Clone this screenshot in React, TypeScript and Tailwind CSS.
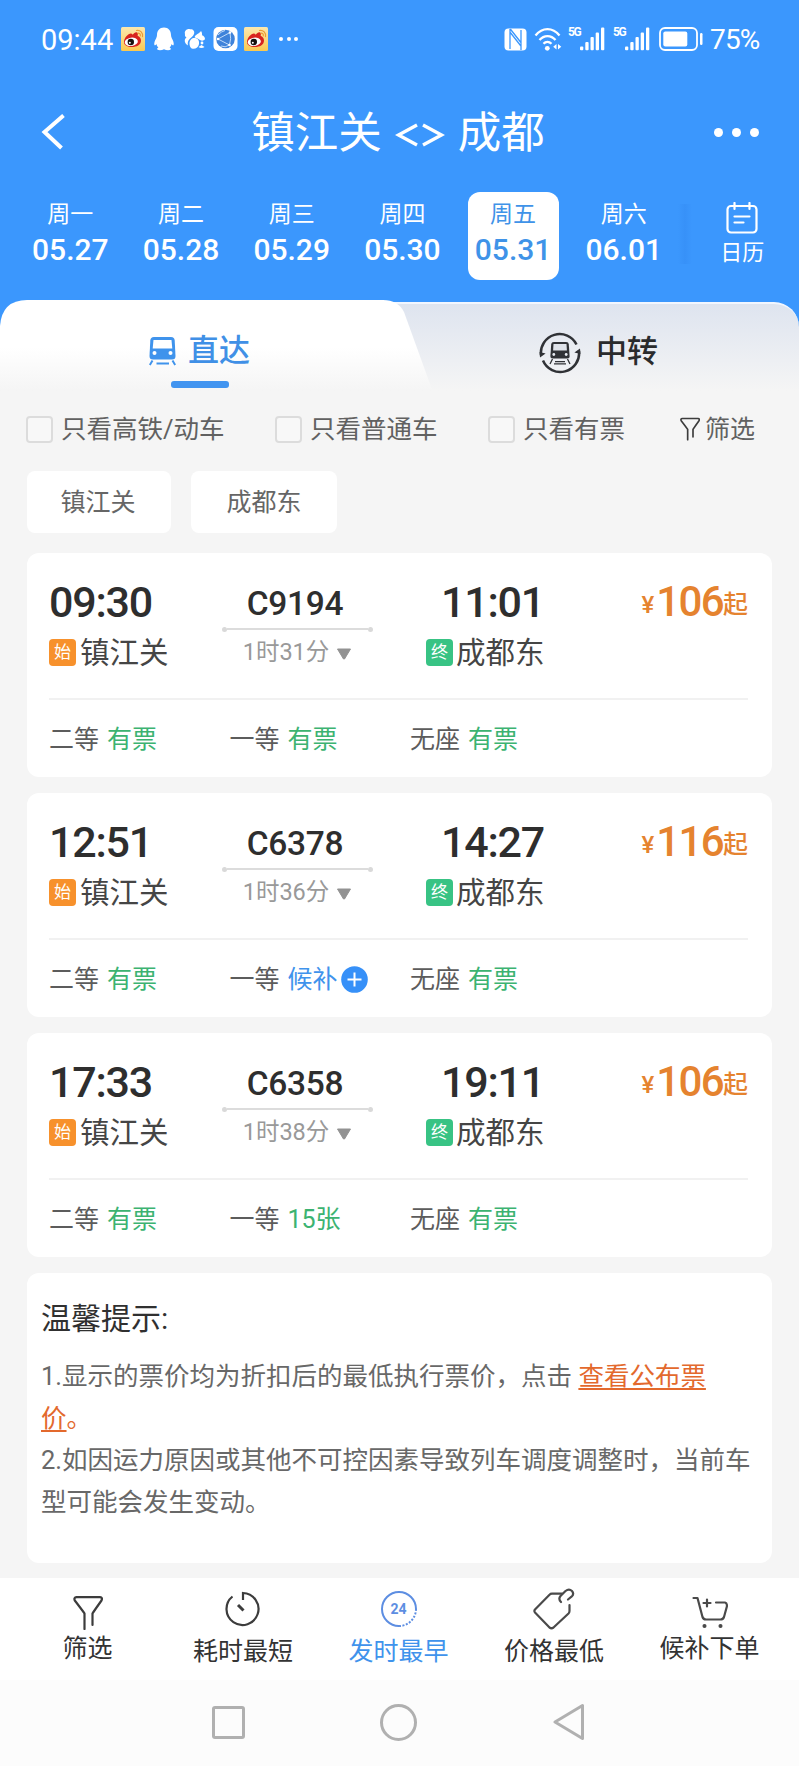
import type { ReactNode } from "react";

type Seat = { name: string; status: string; waitlist?: boolean };

type Train = {
  code: string;
  depart: string;
  arrive: string;
  duration: string;
  price: number;
  seats: Seat[];
};

const days = [
  { week: "周一", date: "05.27" },
  { week: "周二", date: "05.28" },
  { week: "周三", date: "05.29" },
  { week: "周四", date: "05.30" },
  { week: "周五", date: "05.31", active: true },
  { week: "周六", date: "06.01" },
];

const trains: Train[] = [
  {
    code: "C9194",
    depart: "09:30",
    arrive: "11:01",
    duration: "1时31分",
    price: 106,
    seats: [
      { name: "二等", status: "有票" },
      { name: "一等", status: "有票" },
      { name: "无座", status: "有票" },
    ],
  },
  {
    code: "C6378",
    depart: "12:51",
    arrive: "14:27",
    duration: "1时36分",
    price: 116,
    seats: [
      { name: "二等", status: "有票" },
      { name: "一等", status: "候补", waitlist: true },
      { name: "无座", status: "有票" },
    ],
  },
  {
    code: "C6358",
    depart: "17:33",
    arrive: "19:11",
    duration: "1时38分",
    price: 106,
    seats: [
      { name: "二等", status: "有票" },
      { name: "一等", status: "15张" },
      { name: "无座", status: "有票" },
    ],
  },
];

function WeiboIcon() {
  return (
    <svg width="24" height="24" viewBox="0 0 24 24">
      <defs>
        <linearGradient id="weibo" x1="0" y1="0" x2="0" y2="1">
          <stop offset="0" stopColor="#fbe8b0" />
          <stop offset="1" stopColor="#fbc94f" />
        </linearGradient>
      </defs>
      <rect width="24" height="24" rx="1.5" fill="url(#weibo)" />
      <path d="M3 15c0-4 4-8.500 7-8.500 1 0 1.500.8 1.700 1.300C13 6 14.500 5 16 5.500c1.200.5 1 2 .6 3.200 1.800.8 3.400 2.300 3.400 4.800 0 4.500-4.500 6.500-9 6.500s-8-1.800-8-5z" fill="#d8241f" />
      <ellipse cx="10.300" cy="14.800" rx="6.600" ry="4.200" fill="#fff" transform="rotate(-8 10.300 14.800)" />
      <circle cx="9.800" cy="15" r="3.200" fill="#17110f" />
      <circle cx="8.800" cy="15.800" r="1" fill="#fff" />
      <path d="M15.500 3.500c3.800-.6 6.800 2.300 6 6.200M17 6.200c1.800 0 2.600 1 2.300 2.600" fill="none" stroke="#ec9b35" strokeWidth="1.200" strokeLinecap="round" />
    </svg>
  );
}

function PenguinIcon() {
  return (
    <svg width="22" height="24" viewBox="0 0 22 24" fill="#fff">
      <path d="M11 .5c4.500 0 7 3.300 7 7.500 0 1.200.3 2 .8 3.300 1.300 2.300 2.400 4.700 1.800 6.700-.5.900-1.400-.2-2-1-.3 1.400-.9 2.500-2 3.600 1.200.6 1.700 1.400.8 2.100-1.300.8-4.500.6-6.400-.5-1.900 1.100-5.100 1.300-6.400.5-.9-.7-.4-1.500.8-2.100-1.100-1.100-1.700-2.200-2-3.600-.6.800-1.500 1.900-2 1-.6-2 .5-4.400 1.800-6.700C3.700 10 4 9.200 4 8 4 3.800 6.500.5 11 .5z" />
    </svg>
  );
}

function SquirrelIcon() {
  return (
    <svg width="22" height="22" viewBox="0 0 22 22" fill="#fff">
      <path d="M1 6C0 3 3 .5 6 1.200 9 .8 11 3 10 6c-.7 2.500-4 4-5.500 6.500-1.200 2.200-.5 5-.5 5C0 15 0 11 2.500 9.500 1 8.500.7 7.500 1 6z" />
      <path d="M10.500 9.300c1-3.300 4.500-3.300 6.500-6.300 1 1.500 1.300 2.800 1 4.300 1.800.5 3 2 3 4-1.300 1.700-3.500 1.700-5 .7-1.500-1-3.500-1.700-5.500-2.700z" />
      <path d="M5.500 15.500c0-4 3-6 5.700-5.500 3 .4 4.300 3 3.800 6-.5 3-3 5-6.300 4.700-2.200-.2-3.200-2.700-3.200-5.200z" />
      <circle cx="18" cy="15" r="1.400" />
      <path d="M14.500 19c1.500 1.500 4.500 1.300 6 0l-3-2z" />
    </svg>
  );
}

function GlobeIcon() {
  return (
    <svg width="25" height="24" viewBox="0 0 25 24" fill="none">
      <rect x=".5" width="24" height="24" rx="5" fill="#fff" />
      <circle cx="12.500" cy="12" r="9.300" fill="#3f83da" />
      <path d="M5 12L17 5.500M5 12l11.500 6M17 5.500q1.500 6-.5 12.500M5 8q3-3.500 7-4.500M8 19q4 2 8.500-1" stroke="#cfe4fc" strokeWidth=".9" />
      <circle cx="17" cy="5.500" r="1.300" fill="#fff" />
      <circle cx="5" cy="12" r="1.300" fill="#fff" />
      <circle cx="16.500" cy="18" r="1.300" fill="#fff" />
    </svg>
  );
}

function NfcIcon() {
  return (
    <svg width="23" height="23" viewBox="0 0 23 23">
      <rect x=".5" y=".5" width="22" height="22" rx="4" fill="#fff" />
      <path d="M6 1v20M6.300 4.500l11 14M6.300 1l11 14M17 2v20" fill="none" stroke="#3b97fd" strokeWidth="1.300" />
    </svg>
  );
}

function WifiIcon() {
  return (
    <svg width="28" height="24" viewBox="0 0 28 24" fill="none">
      <path d="M1.500 8.500C8.500 0 18.500 0 25.500 8.500M5.500 13c4.500-5.300 11.500-5.300 16 0M9.500 16.800c2.300-2.500 5.500-2.500 8 0" stroke="#fff" strokeWidth="2.300" />
      <circle cx="13.300" cy="21.300" r="2.400" fill="#fff" />
      <path d="M22.500 17v5.500l-3.300-2.700zM24 17v5.500l3.300-2.700z" fill="#fff" />
    </svg>
  );
}

function Signal() {
  return (
    <div className="flex h-6 w-[38px] items-start">
      <span className="w-[12px] text-[12px] leading-[11px] font-bold tracking-[-1.4px]">5G</span>
      <svg width="25" height="24" viewBox="0 0 25 24" fill="#fff">
        <rect x="0" y="19.500" width="3.300" height="3.700" rx="1" />
        <rect x="5.300" y="15" width="3.300" height="8.200" rx="1" />
        <rect x="10.500" y="10" width="3.300" height="13.200" rx="1" />
        <rect x="15.700" y="5.500" width="3.300" height="17.700" rx="1" />
        <rect x="21" y="0.500" width="3.300" height="22.700" rx="1" />
      </svg>
    </div>
  );
}

function BatteryIcon() {
  return (
    <svg width="44" height="24" viewBox="0 0 44 24" fill="none">
      <rect x="1" y="1" width="37" height="22" rx="5" stroke="#fff" strokeWidth="1.800" />
      <rect x="4.300" y="4.500" width="24" height="15" rx="2" fill="#fff" />
      <rect x="41" y="6" width="2.500" height="12" rx="1.200" fill="#fff" />
    </svg>
  );
}

function StatusBar() {
  return (
    <div className="flex h-[78px] items-center pl-[41px] text-white">
      <span className="mt-[2px] w-[80px] text-[29px] leading-none">09:44</span>
      <WeiboIcon />
      <span className="ml-[8px]"><PenguinIcon /></span>
      <span className="ml-[9px]"><SquirrelIcon /></span>
      <span className="ml-[7px]"><GlobeIcon /></span>
      <span className="ml-[6px]"><WeiboIcon /></span>
      <span className="ml-[11px] flex gap-[3.500px]">
        <i className="size-1 rounded-full bg-white" />
        <i className="size-1 rounded-full bg-white" />
        <i className="size-1 rounded-full bg-white" />
      </span>
      <div className="mr-[38px] ml-auto flex items-center">
        <NfcIcon />
        <span className="ml-[7px]"><WifiIcon /></span>
        <span className="ml-[6px]"><Signal /></span>
        <span className="ml-[7px]"><Signal /></span>
        <span className="ml-[8px]"><BatteryIcon /></span>
        <span className="mt-[2px] ml-[7px] w-[51px] text-[28px] leading-none tracking-[-0.8px]">75%</span>
      </div>
    </div>
  );
}

function TitleBar() {
  return (
    <div className="flex h-[108px] items-center text-white">
      <svg className="ml-[41px]" width="25" height="36" viewBox="0 0 25 36" fill="none">
        <path d="M22.500 1.500L3.500 18l17 16" stroke="#fff" strokeWidth="4" />
      </svg>
      <h1 className="flex flex-1 items-center justify-center pt-[4px] pl-[16px] text-[43.500px] leading-none">
        镇江关
        <svg className="mx-[13px] mt-px" width="50" height="24" viewBox="0 0 50 24" fill="none">
          <path d="M22 2L3.500 12 22 22M28 2l18.500 10L28 22" stroke="#fff" strokeWidth="3.400" />
        </svg>
        成都
      </h1>
      <div className="mr-[40px] flex gap-[9px]">
        <i className="size-[9px] rounded-full bg-white" />
        <i className="size-[9px] rounded-full bg-white" />
        <i className="size-[9px] rounded-full bg-white" />
      </div>
    </div>
  );
}

function DateStrip() {
  return (
    <div className="flex h-[114px] pt-[6px] pl-[15px] text-white">
      {days.map((day) => (
        <div key={day.date} className="flex w-[110.700px] justify-center">
          <div
            className={
              day.active
                ? "flex h-[88px] w-[91px] flex-col items-center rounded-xl bg-white text-[#3f93e8]"
                : "flex h-[88px] w-[91px] flex-col items-center"
            }
          >
            <span className="mt-[11px] text-[23px] leading-6">{day.week}</span>
            <span className="mt-[7px] text-[30px] leading-8 font-medium">{day.date}</span>
          </div>
        </div>
      ))}
      <div className="mt-[12px] -ml-px h-[60px] w-[14px] bg-linear-to-r from-[#3b97fd] via-[#3791f8] to-[#3b97fd]" />
      <div className="ml-[28px] flex flex-col items-center pt-[10px]">
        <svg width="32" height="32" viewBox="0 0 32 32" fill="none" stroke="#fff" strokeWidth="2.200" strokeLinecap="round">
          <rect x="1.500" y="4" width="29" height="26.500" rx="3.500" />
          <path d="M8.500 1v6M23.500 1v6M8.500 14.500h15M8.500 20.500h9" />
        </svg>
        <span className="mt-[7px] text-[22px] leading-[23px]">日历</span>
      </div>
    </div>
  );
}

function TrainIcon() {
  return (
    <svg width="27" height="30" viewBox="0 0 27 30">
      <path d="M5 1h17c2.500 0 3.500 1.200 3.700 3.500L26.500 20c0 2.500-1 3.500-3.500 3.500H4C1.500 23.500.5 22.500.5 20L1.300 4.500C1.500 2.200 2.500 1 5 1z" fill="#3f93ec" />
      <path d="M4.500 4h18l.8 8.500H3.700z" fill="#fff" />
      <circle cx="5.500" cy="17" r="2" fill="#fff" />
      <circle cx="21.500" cy="17" r="2" fill="#fff" />
      <path d="M3.500 24.500L.8 29M23.500 24.500l2.700 4.500M7.500 27.500h12.500" stroke="#3f93ec" strokeWidth="2" />
    </svg>
  );
}

function TransferIcon() {
  return (
    <svg width="42" height="42" viewBox="0 0 42 42" fill="none">
      <path d="M2 23A18.800 18.800 0 0 1 37.500 12.500" stroke="#303236" strokeWidth="2.500" />
      <path d="M40 19A18.800 18.800 0 0 1 4 28.500" stroke="#303236" strokeWidth="2.500" />
      <path d="M.6 20l6 1.500L1 25.500zM41.400 22l-6-1.500 5.600-4z" fill="#303236" />
      <path d="M15 10h12c1.800 0 2.600.8 2.800 2.500l.8 11.500c0 1.800-.8 2.500-2.500 2.500H13.900c-1.700 0-2.500-.7-2.500-2.500l.8-11.500c.2-1.700 1-2.500 2.800-2.500z" fill="#303236" />
      <path d="M14.500 12h13l.4 6.500H14.100z" fill="#dfe3ea" />
      <circle cx="14.800" cy="22.500" r="1.400" fill="#e9edf3" />
      <circle cx="27.200" cy="22.500" r="1.400" fill="#e9edf3" />
      <path d="M13.500 27l-2.500 5M28.500 27l2.500 5M16 29.700h10M15 31.800h12" stroke="#303236" strokeWidth="1.300" />
    </svg>
  );
}

function RouteTabs() {
  return (
    <div className="flex h-[95px] bg-linear-to-b from-[#3b97fd] from-50% to-[#f4f4f5] to-50%">
      <div className="relative z-10 h-[95px] w-[437px] bg-linear-to-b from-white from-50% to-[#f5f5f5] to-95% [clip-path:path('M0_26Q2_0_27_0H383Q398_0_404_12L434_95H0Z')]">
        <div className="ml-[149px] flex h-[101px] items-center">
          <TrainIcon />
          <span className="ml-[12px] text-[31px] leading-none font-medium text-[#4090e6]">直达</span>
        </div>
        <div className="-mt-[20px] ml-[171px] h-[7px] w-[58px] rounded-[3px] bg-[#4194f0]" />
      </div>
      <div className="mt-[2px] -ml-[67px] flex flex-1 items-start rounded-tr-[25px] border-t-2 border-[#f1f6ff] bg-linear-to-b from-[#dee4ef] to-[#f5f5f5] to-95% pl-[169px]">
        <div className="flex h-[97px] items-center">
          <TransferIcon />
          <span className="-mt-[2px] ml-[15px] text-[31px] leading-none font-medium text-[#2a2b2d]">中转</span>
        </div>
      </div>
    </div>
  );
}

function Check({ label }: { label: string }) {
  return (
    <label className="flex items-center">
      <span className="mt-px size-[27px] rounded-[4px] border-2 border-[#dcdcdc] bg-[#f8f8f8]" />
      <span className="mt-px ml-[8px] text-[25.500px] leading-none">{label}</span>
    </label>
  );
}

function FunnelIcon({ className }: { className?: string }) {
  return (
    <svg className={className} viewBox="0 0 30 34" fill="none" stroke="#3c3c3c" strokeLinecap="round" strokeLinejoin="round">
      <path d="M11.500 33V17.500Q11 16.500 1.800 4.500Q.5 1.500 3.500 1.200H27Q30 1.500 28.500 4.500Q20 16.500 19.500 17.500V29" />
    </svg>
  );
}

function Filters() {
  return (
    <>
      <div className="flex h-[68px] items-center pl-[26px] whitespace-nowrap text-[#616161]">
        <div className="w-[249px]"><Check label="只看高铁/动车" /></div>
        <div className="w-[213px]"><Check label="只看普通车" /></div>
        <div className="w-[192px]"><Check label="只看有票" /></div>
        <FunnelIcon className="h-[24px] w-[20px] stroke-[2.500]" />
        <span className="mt-px ml-[5px] text-[25px] leading-none">筛选</span>
      </div>
      <div className="flex h-[90px] gap-[20px] pt-[8px] pl-[27px] text-[25px] text-[#666]">
        <div className="flex h-[62px] w-[144px] items-center justify-center rounded-lg bg-white pr-[2px] pt-px">镇江关</div>
        <div className="flex h-[62px] w-[146px] items-center justify-center rounded-lg bg-white pt-px">成都东</div>
      </div>
    </>
  );
}

function Badge({ kind }: { kind: "始" | "终" }) {
  return (
    <span
      className={
        kind === "始"
          ? "flex size-[27px] items-center justify-center rounded-[4px] bg-[#f7912c] text-[17px] leading-none text-white"
          : "flex size-[27px] items-center justify-center rounded-[4px] bg-[#38c384] text-[17px] leading-none text-white"
      }
    >
      {kind}
    </span>
  );
}

function TrainCard({ train }: { train: Train }) {
  return (
    <article className="h-[224px] rounded-xl bg-white pr-[24px] pl-[22px]">
      <div className="flex h-[147px] border-b-2 border-[#f1f1f1]">
        <div className="w-[173px] pt-[26px]">
          <p className="text-[43px] leading-[46px] font-medium tracking-[-1.2px] text-[#2e2e2e]">{train.depart}</p>
          <div className="mt-[11px] flex h-[34px] items-center">
            <Badge kind="始" />
            <span className="mt-[3px] ml-[4px] text-[29.500px] leading-none text-[#454545]">镇江关</span>
          </div>
        </div>
        <div className="flex w-[151px] flex-col items-center pt-[32px]">
          <p className="pr-[5px] text-[33.500px] leading-[38px] font-medium tracking-[-0.3px] text-[#2e2e2e]">{train.code}</p>
          <div className="mt-[4px] flex w-full items-center">
            <i className="size-[5px] rounded-full bg-[#d9d9d9]" />
            <i className="h-[1.500px] flex-1 bg-[#dcdcdc]" />
            <i className="size-[5px] rounded-full bg-[#d9d9d9]" />
          </div>
          <div className="mt-[8px] flex h-[26px] items-center text-[23.500px] leading-none text-[#999]">
            {train.duration}
            <svg className="mt-[3px] ml-[7px]" width="16" height="12" viewBox="0 0 16 12">
              <path d="M1.500 1h13L8.500 11h-1z" fill="#929292" stroke="#929292" strokeLinejoin="round" />
            </svg>
          </div>
        </div>
        <div className="ml-[53px] pt-[26px]">
          <p className="pl-[15px] text-[43px] leading-[46px] font-medium tracking-[-1.2px] text-[#2e2e2e]">{train.arrive}</p>
          <div className="mt-[11px] flex h-[34px] items-center">
            <Badge kind="终" />
            <span className="mt-[3px] ml-[3px] text-[29.500px] leading-none text-[#454545]">成都东</span>
          </div>
        </div>
        <div className="ml-auto flex h-[46px] items-start pt-[26px] text-[#e5832f]">
          <span className="pt-[14px] text-[24px] leading-[25px] font-medium">¥</span>
          <span className="ml-[2px] text-[42px] leading-[46px] font-medium tracking-[-1.600px]">{train.price}</span>
          <span className="pt-[13px] text-[25px] leading-[26px] font-medium">起</span>
        </div>
      </div>
      <div className="flex h-[77px] items-center pt-[2px] text-[25px] leading-none text-[#5c5c5c]">
        {train.seats.map((seat) => (
          <div key={seat.name} className="flex w-[180.500px] items-center">
            <span>{seat.name}</span>
            <span className={seat.waitlist ? "ml-[8px] text-[#3f93ec]" : "ml-[8px] text-[#3cb371]"}>{seat.status}</span>
            {seat.waitlist && (
              <svg className="ml-[3px]" width="27" height="27" viewBox="0 0 27 27">
                <circle cx="13.500" cy="13.500" r="13.300" fill="#3690f8" />
                <path d="M13.500 6.500v14M6.500 13.500h14" stroke="#fff" strokeWidth="2" />
              </svg>
            )}
          </div>
        ))}
      </div>
    </article>
  );
}

function Tips() {
  return (
    <section className="h-[290px] rounded-xl bg-white px-[14px] pt-[26px]">
      <h2 className="text-[30px] leading-[40px] text-[#303030]">温馨提示:</h2>
      <div className="mt-[16px] text-[25.500px] leading-[42.300px] whitespace-nowrap text-[#686868]">
        <p>
          1.显示的票价均为折扣后的最低执行票价，点击{" "}
          <a className="text-[#e3692d] underline decoration-2 underline-offset-[3px]">
            查看公布票
            <br />
            价
          </a>
          <span className="text-[#e3692d]">。</span>
        </p>
        <p>
          2.如因运力原因或其他不可控因素导致列车调度调整时，当前车
          <br />
          型可能会发生变动。
        </p>
      </div>
    </section>
  );
}

function SortItem({ icon, label, active, raised }: { icon: ReactNode; label: string; active?: boolean; raised?: boolean }) {
  return (
    <div className={active ? "w-[155.500px] text-[#3f93ec]" : "w-[155.500px] text-[#333]"}>
      <div className="flex h-[54px] items-center justify-center pt-[8px]">{icon}</div>
      <p className={raised ? "mt-[4px] text-center text-[25px] leading-[26px]" : "mt-[7px] text-center text-[25px] leading-[26px]"}>{label}</p>
    </div>
  );
}

function SortBar() {
  return (
    <div className="mt-[15px] flex h-[103px] justify-center bg-white pr-[2px] whitespace-nowrap">
      <SortItem raised label="筛选" icon={<FunnelIcon className="mt-[8px] h-[34px] w-[30px] stroke-[2.200]" />} />
      <SortItem
        label="耗时最短"
        icon={
          <svg width="36" height="36" viewBox="0 0 36 36" fill="none" stroke="#3c3c3c" strokeWidth="2.200">
            <path d="M7.500 5.500A16 16 0 1 0 18 2v7" />
            <path d="M13 14l5.500 5.500" strokeWidth="3" />
          </svg>
        }
      />
      <SortItem
        active
        label="发时最早"
        icon={
          <div className="relative flex size-[36px] items-center justify-center">
            <svg className="absolute inset-0" width="36" height="36" viewBox="0 0 36 36" fill="none" stroke="#5d8ee2" strokeWidth="2">
              <path d="M18 35A17 17 0 1 1 35 18" />
              <path d="M35 18A17 17 0 0 1 18 35" strokeDasharray="2 1.500" />
            </svg>
            <span className="text-[14px] leading-none font-bold text-[#5d8ee2]">24</span>
          </div>
        }
      />
      <SortItem
        label="价格最低"
        icon={
          <svg width="44" height="42" viewBox="0 0 44 42" fill="none" stroke="#4a4a4a" strokeWidth="2.200" strokeLinecap="round" strokeLinejoin="round">
            <path d="M30 5.700H20Q18.500 5.700 17.500 6.700L3 21.500Q1.800 23 3 24.500L17.500 39.500Q19.500 41 21.500 39.500L36.500 25.500Q37.500 24.500 37.500 23V17" />
            <path d="M29 14Q26 11 28.500 8L33.500 3Q37 .3 40 3 42.500 6 39.500 8.700L36 11.500" />
          </svg>
        }
      />
      <SortItem
        raised
        label="候补下单"
        icon={
          <svg className="mt-[8px]" width="36" height="33" viewBox="0 0 36 33" fill="none" stroke="#4a4a4a" strokeWidth="2.200" strokeLinecap="round" strokeLinejoin="round">
            <path d="M1.500 2H5.500L10.500 21Q11.500 23.500 14 23.500H28.500Q31 23.500 32 21L35 10Q35 7 33 6.500H24" />
            <path d="M15 3.500v7M11.500 7h7" />
            <circle cx="12.500" cy="30" r="1.300" fill="#4a4a4a" strokeWidth="1.500" />
            <circle cx="28.500" cy="30" r="1.300" fill="#4a4a4a" strokeWidth="1.500" />
          </svg>
        }
      />
    </div>
  );
}

function SystemNav() {
  return (
    <div className="flex h-[86px] items-center justify-center bg-[#fcfcfc] pr-[2px] pb-[2px]">
      <div className="flex w-[170px] justify-center">
        <i className="size-[33px] rounded-[3px] border-3 border-[#b0b0b0]" />
      </div>
      <div className="flex w-[170px] justify-center">
        <i className="size-[37px] rounded-full border-3 border-[#b0b0b0]" />
      </div>
      <div className="flex w-[170px] justify-center">
        <svg width="32" height="38" viewBox="0 0 32 38" fill="none">
          <path d="M29.500 2.500v33L2 19z" stroke="#b0b0b0" strokeWidth="3" strokeLinejoin="round" />
        </svg>
      </div>
    </div>
  );
}

export default function App() {
  return (
    <div className="flex h-[1766px] w-[799px] flex-col overflow-hidden bg-[#f5f5f5] font-[Roboto,'Noto_Sans_CJK_SC',sans-serif]">
      <header className="h-[300px] bg-[#3b97fd]">
        <StatusBar />
        <TitleBar />
        <DateStrip />
      </header>
      <RouteTabs />
      <Filters />
      <main className="flex flex-col gap-[16px] px-[27px]">
        {trains.map((train) => (
          <TrainCard key={train.code} train={train} />
        ))}
        <Tips />
      </main>
      <SortBar />
      <SystemNav />
    </div>
  );
}
